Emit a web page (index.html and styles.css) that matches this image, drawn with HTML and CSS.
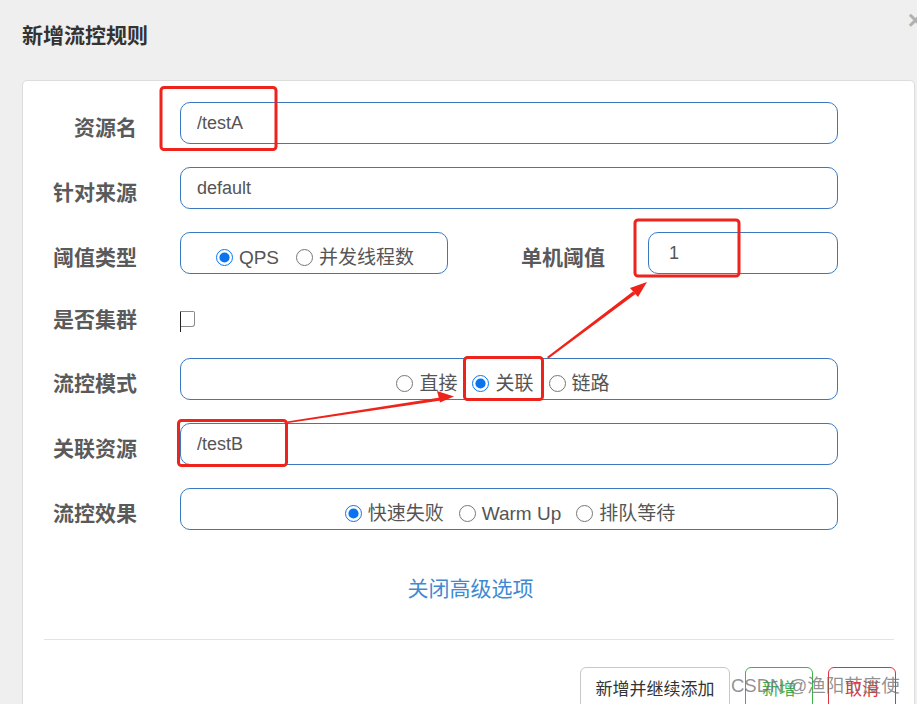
FILE: index.html
```html
<!DOCTYPE html>
<html lang="zh-CN">
<head>
<meta charset="utf-8">
<title>新增流控规则</title>
<link rel="stylesheet" href="styles.css">
</head>
<body>
<div class="modal">
  <header class="modal-header">
    <h4 class="modal-title">新增流控规则</h4>
    <span class="close">×</span>
  </header>
  <div class="panel">
    <form class="form">
      <div class="row">
        <label class="lbl">资源名</label>
        <input class="input" type="text" value="/testA">
      </div>
      <div class="row">
        <label class="lbl">针对来源</label>
        <input class="input" type="text" value="default">
      </div>
      <div class="row">
        <label class="lbl">阈值类型</label>
        <div class="radio-box narrow">
          <label class="radio"><input type="radio" name="grade" checked>QPS</label>
          <label class="radio"><input type="radio" name="grade">并发线程数</label>
        </div>
        <label class="lbl lbl-flex">单机阈值</label>
        <input class="input short" type="text" value="1">
      </div>
      <div class="row row-check">
        <label class="lbl">是否集群</label>
        <span class="check"></span>
      </div>
      <div class="row">
        <label class="lbl">流控模式</label>
        <div class="radio-box shift-left">
          <label class="radio"><input type="radio" name="strategy">直接</label>
          <label class="radio"><input type="radio" name="strategy" checked>关联</label>
          <label class="radio"><input type="radio" name="strategy">链路</label>
        </div>
      </div>
      <div class="row">
        <label class="lbl">关联资源</label>
        <input class="input" type="text" value="/testB">
      </div>
      <div class="row">
        <label class="lbl">流控效果</label>
        <div class="radio-box">
          <label class="radio"><input type="radio" name="behavior" checked>快速失败</label>
          <label class="radio"><input type="radio" name="behavior">Warm Up</label>
          <label class="radio"><input type="radio" name="behavior">排队等待</label>
        </div>
      </div>
    </form>
    <div class="advanced"><a class="link">关闭高级选项</a></div>
    <hr class="divider">
    <div class="actions">
      <button class="btn btn-default" type="button">新增并继续添加</button>
      <button class="btn btn-success" type="button">新增</button>
      <button class="btn btn-danger" type="button">取消</button>
    </div>
  </div>
</div>

<svg class="marks" width="917" height="704" viewBox="0 0 917 704">
  <g fill="none" stroke="#ee231b" stroke-width="3">
    <rect x="161" y="87.5" width="115" height="62" rx="3"/>
    <rect x="635" y="220" width="104" height="56" rx="3"/>
    <rect x="464.5" y="357.5" width="78" height="42" rx="3"/>
    <rect x="178.5" y="420.5" width="108" height="45" rx="3"/>
  </g>
  <g fill="#ee231b">
    <polygon points="287,421.5 440,397.5 441,400.5 288,423"/>
    <polygon points="454,396.5 437,391 440,402.5"/>
    <polygon points="547,357 633,291.5 635.5,294 548.5,358.5"/>
    <polygon points="647,282 630,288 638,297"/>
  </g>
</svg>

<div class="watermark">CSDN @渔阳节度使</div>
</body>
</html>
```

FILE: styles.css
```css
html, body {
  margin: 0;
  padding: 0;
  height: 704px;
  overflow: hidden;
  background: #efefef;
  font-family: "Liberation Sans", "Noto Sans CJK SC", sans-serif;
  color: #555;
}

.modal {
  display: flex;
  flex-direction: column;
}

.modal-header {
  display: flex;
  justify-content: space-between;
  align-items: flex-start;
  height: 80px;
  padding-left: 22px;
  box-sizing: border-box;
}

.modal-title {
  margin: 20px 0 0;
  font-size: 21px;
  line-height: 28px;
  font-weight: bold;
  color: #333;
  font-family: "Noto Sans CJK SC", sans-serif;
}

.close {
  margin-top: 6px;
  margin-right: -6px;
  font-size: 26px;
  line-height: 28px;
  font-weight: bold;
  color: #b0b0b0;
}

.panel {
  margin-left: 22px;
  width: 893px;
  height: 700px;
  box-sizing: border-box;
  background: #fff;
  border: 1px solid #dcdcdc;
  border-radius: 5px;
  padding-top: 21px;
}

.form {
  display: flex;
  flex-direction: column;
  gap: 23px;
  padding-right: 76px;
}

.row {
  display: flex;
  align-items: center;
  gap: 43px;
  height: 42px;
}

.row-check {
  height: 38px;
  padding-top: 4px;
  box-sizing: border-box;
}

.lbl {
  width: 114px;
  flex: none;
  text-align: right;
  font-family: "Noto Sans CJK SC", sans-serif;
  font-size: 21px;
  font-weight: bold;
  color: #5a5a5a;
  line-height: 28px;
  padding-top: 5px;
}

.row-check .lbl {
  padding-top: 0;
}

.lbl-flex {
  flex: 1;
  width: auto;
  margin-left: -43px;
}

.input {
  flex: 1;
  height: 42px;
  box-sizing: border-box;
  margin: 0;
  border: 1px solid #3a79c0;
  border-radius: 10px;
  padding: 0 16px;
  font-family: "Liberation Sans", "Noto Sans CJK SC", sans-serif;
  font-size: 18px;
  color: #555;
  background: #fff;
  outline: none;
}

.input.short {
  flex: none;
  width: 190px;
  padding-left: 20px;
}

.radio-box {
  flex: 1;
  height: 42px;
  box-sizing: border-box;
  border: 1px solid #3a79c0;
  border-radius: 10px;
  display: flex;
  justify-content: center;
  align-items: center;
  gap: 15px;
  padding-top: 9px;
  padding-left: 2px;
}

.radio-box.shift-left {
  padding-left: 0;
  padding-right: 12px;
}

.radio-box.narrow {
  flex: none;
  width: 268px;
  gap: 17px;
}

.radio {
  display: flex;
  align-items: center;
  gap: 6px;
  font-size: 19px;
  line-height: 26px;
  color: #555;
}

.radio input {
  width: 17px;
  height: 17px;
  margin: 0;
  accent-color: #0a74f0;
}

.check {
  position: relative;
  width: 15px;
  height: 16px;
  box-sizing: border-box;
  border: 1.5px solid #8a8a8a;
  border-left: 1px solid #222;
  border-radius: 0 2px 3px 0;
  margin-top: 2px;
}

.check::after {
  content: "";
  position: absolute;
  left: -1px;
  top: 14px;
  width: 1px;
  height: 6px;
  background: #222;
}

.advanced {
  text-align: center;
  margin-top: 43px;
  padding-left: 4px;
}

.link {
  font-family: "Noto Sans CJK SC", sans-serif;
  font-size: 21px;
  line-height: 28px;
  color: #3f8ad2;
  cursor: pointer;
}

.divider {
  margin: 38px 20px 0 21px;
  border: 0;
  border-top: 1.5px solid #e3e3e3;
}

.actions {
  display: flex;
  justify-content: flex-end;
  gap: 15px;
  padding-right: 18px;
  margin-top: 27px;
}

.btn {
  height: 46px;
  box-sizing: border-box;
  background: #fff;
  border-radius: 6px;
  font-family: "Noto Sans CJK SC", sans-serif;
  font-size: 17px;
  padding: 0 0 4px;
  line-height: 24px;
}

.btn-default {
  width: 150px;
  border: 1px solid #c8c8c8;
  color: #333;
}

.btn-success {
  width: 68px;
  border: 1px solid #3bb54a;
  color: #3bb54a;
}

.btn-danger {
  width: 68px;
  border: 1px solid #e0323c;
  color: #e0323c;
}

.marks {
  position: absolute;
  left: 0;
  top: 0;
  pointer-events: none;
}

.watermark {
  position: absolute;
  left: 731px;
  top: 673px;
  font-size: 18.5px;
  line-height: 26px;
  color: rgba(110, 110, 110, 0.75);
  white-space: nowrap;
  pointer-events: none;
}
```
